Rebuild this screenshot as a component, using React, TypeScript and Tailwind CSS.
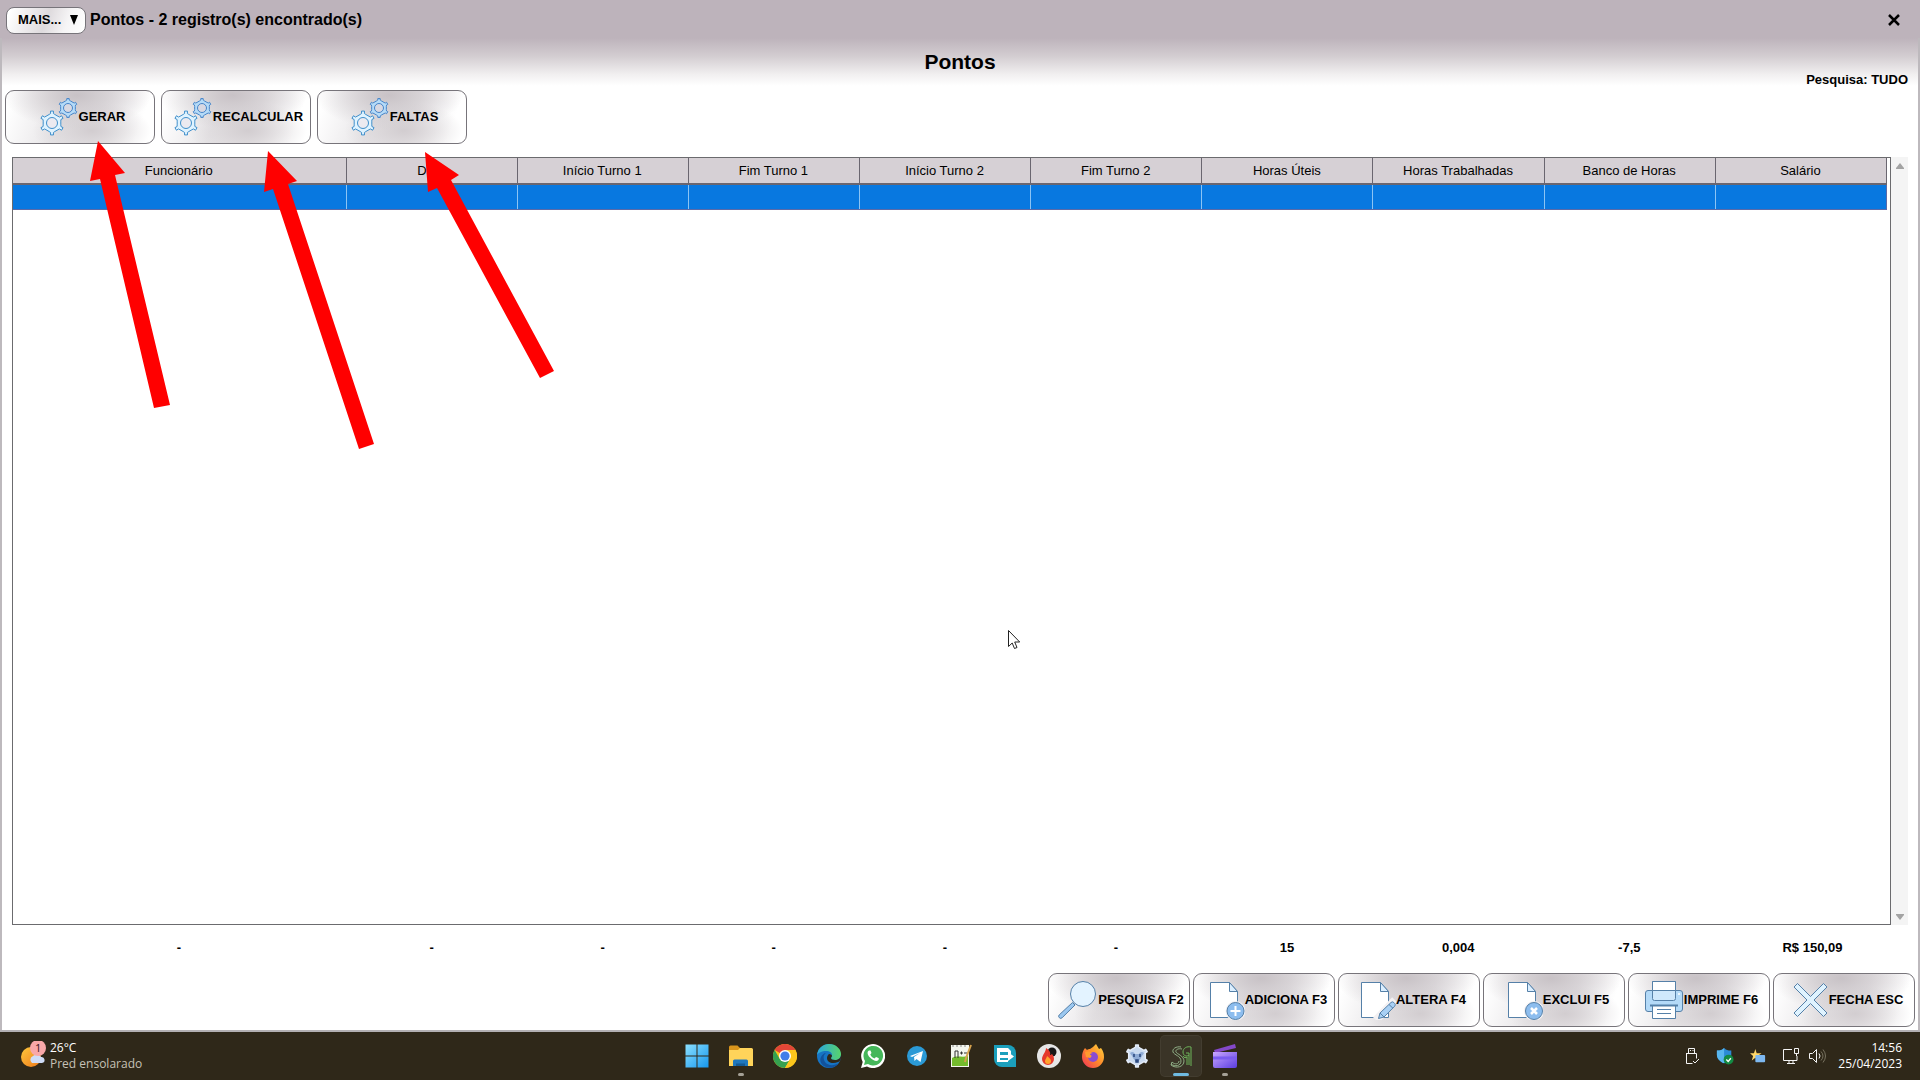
import type { ReactNode } from "react";

const columns = [
      "Funcionário",
      "Data",
      "Início Turno 1",
      "Fim Turno 1",
      "Início Turno 2",
      "Fim Turno 2",
      "Horas Úteis",
      "Horas Trabalhadas",
      "Banco de Horas",
      "Salário",
];

const totals = ["-", "-", "-", "-", "-", "-", "15", "0,004", "-7,5", "R$ 150,09"];

const line = "#5580a8";

// Closed outline of a toothed wheel
const gearPath = (cx: number, cy: number, outer: number, inner: number, teeth: number, turn: number) => {
      const points: string[] = [];
      const step = (Math.PI * 2) / teeth;
      for (let i = 0; i < teeth; i++) {
            const a = turn + i * step;
            const corners: [number, number][] = [
                  [-0.3, inner],
                  [-0.14, inner + 0.6],
                  [-0.12, outer],
                  [0.12, outer],
                  [0.14, inner + 0.6],
                  [0.3, inner],
            ];
            corners.forEach(([o, r]) => {
                  const t = a + o * step;
                  points.push(`${(cx + r * Math.cos(t)).toFixed(2)} ${(cy + r * Math.sin(t)).toFixed(2)}`);
            });
      }
      return `M${points.join("L")}Z`;
};

const Icon = ({ children }: { children: ReactNode }) => (
      <svg viewBox="0 0 40 40" className="size-10 shrink-0" fill="none" stroke={line} aria-hidden="true">
            {children}
      </svg>
);

const GearsIcon = () => (
      <Icon>
            <path d={gearPath(13, 26, 12, 9, 6, Math.PI / 2)} fill="#dff3ff" stroke="#3f8fcb" />
            <circle cx="13" cy="26" r="5.5" fill="#eceaf0" stroke="#3f8fcb" />
            <path d={gearPath(29, 11, 9.5, 7.5, 6, Math.PI / 2)} fill="#b5dbf8" stroke="#4785c9" />
            <circle cx="29" cy="11" r="4.5" fill="#d8d8e2" stroke="#4785c9" />
      </Icon>
);

const SearchIcon = () => (
      <Icon>
            <path d="M14.5 22.5 1.3 34.8a2 2 0 0 0 0 2.9 2 2 0 0 0 2.9 0L17 25Z" fill="#9cc8f0" />
            <circle cx="25" cy="14" r="12.5" fill="#e3f3ff" />
      </Icon>
);

const Sheet = () => (
      <>
            <path d="M5.5 2.5h19l8 9v26h-27Z" fill="#fff" />
            <path d="M24.5 2.5v9h8Z" fill="#dcefff" />
      </>
);

const AddIcon = () => (
      <Icon>
            <Sheet />
            <circle cx="30.5" cy="31" r="10" fill="#f3f1f3" stroke="none" />
            <circle cx="30.5" cy="31" r="8.5" fill="#8dbdee" />
            <path d="M30.5 26v10M25.5 31h10" stroke="#fff" strokeWidth="2" />
      </Icon>
);

const EditIcon = () => (
      <Icon>
            <Sheet />
            <path d="M20 40 39 20" stroke="#f3f1f3" strokeWidth="8" />
            <path d="m22.5 38.5 1.5-5.5L35 22.5a2 2 0 0 1 2.8 0l.9.9a2 2 0 0 1 0 2.8L28 37Z" fill="#a9d0f4" />
            <path d="m24 33 4 4M33 24.5l4 3.8" />
      </Icon>
);

const DeleteIcon = () => (
      <Icon>
            <Sheet />
            <circle cx="31" cy="31" r="10" fill="#f3f1f3" stroke="none" />
            <circle cx="31" cy="31" r="8.5" fill="#8dbdee" />
            <path d="m28 28 6 6M34 28l-6 6" stroke="#fff" strokeWidth="2.5" />
      </Icon>
);

const PrintIcon = () => (
      <Icon>
            <rect x="1.5" y="10.5" width="37" height="21" rx="2.5" fill="#b4daf8" />
            <path d="M8.5 1.5h23v17a2 2 0 0 1-2 2h-19a2 2 0 0 1-2-2Z" fill="#cfe8fc" />
            <path d="M8.5 1.5h23v9h-23Z" fill="#fff" />
            <path d="M6 25.5h28" strokeWidth="2" />
            <path d="M8.5 26h23v12.5h-23Z" fill="#fff" />
            <path d="M13 29.5h14M13 33.5h14" />
            <circle cx="35" cy="14" r="1" fill="#fff" stroke="none" />
      </Icon>
);

const CloseIcon = () => (
      <Icon>
            <path
                  d="m8.5 3.5 13 13 13-13L38 7 25 20l13 13-3.500 3.500-13-13-13 13L5 33l13-13L5 7Z"
                  fill="#dff3ff"
                  strokeLinejoin="round"
            />
      </Icon>
);

interface ActionButtonProps {
      label: string;
      icon: ReactNode;
      width: string;
}

const ActionButton = ({ label, icon, width }: ActionButtonProps) => (
      <button
            type="button"
            className={`flex h-[54px] items-center justify-center rounded-[9px] border border-[#77747a] bg-white bg-[radial-gradient(ellipse_50%_65%_at_48%_8%,#c8c2c6_0%,transparent_100%),radial-gradient(ellipse_40%_55%_at_58%_76%,#d2cdd0_0%,transparent_100%),linear-gradient(110deg,#ffffff_5%,#e8e6e8_38%,#eceaec_62%,#ffffff_88%)] pl-1 text-[13px] font-bold whitespace-nowrap ${width}`}
      >
            {icon}
            {label}
      </button>
);

const TitleBar = () => (
      <header className="flex h-[38px] items-center bg-[#bdb3bb] pt-[2px] pr-5 pl-[6px]">
            <button
                  type="button"
                  className="mr-1 flex h-[27px] w-20 items-center justify-between rounded-lg border border-[#77747a] bg-[linear-gradient(110deg,#ffffff_5%,#dedadd_50%,#f6f5f6_75%,#ffffff_100%)] px-[6px] pl-[11px] text-[13px] font-bold"
            >
                  MAIS...
                  <svg viewBox="0 0 10 10" className="size-[10px]" aria-hidden="true">
                        <path d="M1 0h8L5 10Z" />
                  </svg>
            </button>
            <span className="text-base font-bold">Pontos - 2 registro(s) encontrado(s)</span>
            <button type="button" aria-label="Fechar" className="ml-auto">
                  <svg viewBox="0 0 12 12" className="size-3" stroke="#000" strokeWidth="2.5" aria-hidden="true">
                        <path d="m1 1 10 10M11 1 1 11" />
                  </svg>
            </button>
      </header>
);

const PointsTable = () => (
      <div className="mx-[10px] flex flex-1">
            <div className="flex-1 border border-[#6b6b6e] pr-[3px]">
                  <table className="w-full table-fixed border-collapse text-[13px]">
                        <colgroup>
                              <col className="w-[333px]" />
                              {columns.slice(1).map((name) => (
                                    <col key={name} />
                              ))}
                        </colgroup>
                        <thead>
                              <tr className="h-[26px] bg-[#d6d0d5]">
                                    {columns.map((name) => (
                                          <th key={name} scope="col" className="border-r border-b-2 border-[#6a6670] p-0 pr-px font-normal">
                                                {name}
                                          </th>
                                    ))}
                              </tr>
                        </thead>
                        <tbody>
                              <tr className="h-[25px] bg-[#0878e0]">
                                    {columns.map((name) => (
                                          <td key={name} className="border-r border-b border-r-[#8cc4f4] border-b-[#5b6aa8] p-0 last:border-r-[#5b6aa8]" />
                                    ))}
                              </tr>
                        </tbody>
                  </table>
            </div>
            <div className="flex w-[17px] flex-col items-center justify-between bg-[#f4f4f4] pt-[6px] pb-[5px]" aria-hidden="true">
                  <svg viewBox="0 0 8 6" className="w-2" fill="#a3a3a3">
                        <path d="M4 0 8 5v1H0V5Z" />
                  </svg>
                  <svg viewBox="0 0 8 6" className="w-2" fill="#a3a3a3">
                        <path d="M4 6 0 1V0h8v1Z" />
                  </svg>
            </div>
      </div>
);

const TaskIcon = ({ name, running, active, children }: { name: string; running?: boolean; active?: boolean; children: ReactNode }) => (
      <button
            type="button"
            aria-label={name}
            className={`relative flex h-10 w-10 items-center justify-center rounded-sm ${active ? "bg-[#3a3427] ring-1 ring-[#433d30]" : ""}`}
      >
            <svg viewBox="0 0 24 24" className="size-6" fill="none" aria-hidden="true">
                  {children}
            </svg>
            {running && <span className="absolute bottom-0 h-[3px] w-[6px] rounded-full bg-[#a5a196]" />}
            {active && <span className="absolute bottom-0 h-[3px] w-4 rounded-full bg-[#6fbbe2]" />}
      </button>
);

const Taskbar = () => (
      <footer className="grid h-12 grid-cols-[1fr_auto_1fr] items-center bg-[#2f2819] font-['Open_Sans','Noto_Sans',sans-serif] text-xs text-white">
            <button type="button" className="flex items-center gap-[2px] pl-5 text-left">
                  <svg viewBox="0 0 28 30" className="h-[30px] w-7" aria-hidden="true">
                        <defs>
                              <linearGradient id="sun" x1="0" y1="0" x2="1" y2="1">
                                    <stop offset="0" stopColor="#ffc83c" />
                                    <stop offset="1" stopColor="#ee7a1c" />
                              </linearGradient>
                        </defs>
                        <circle cx="11" cy="16" r="10" fill="url(#sun)" />
                        <path d="M12 22a4 4 0 0 1 1-7 5 5 0 0 1 8 1 3 3 0 0 1 1 6Z" fill="#cfdcf6" />
                        <circle cx="18" cy="7" r="8" fill="#f9a8a8" />
                        <text x="15" y="11" fontSize="11" fill="#3a1518">1</text>
                  </svg>
                  <span className="leading-4">
                        26°C
                        <br />
                        <span className="text-[#c6c1b6]">Pred ensolarado</span>
                  </span>
            </button>
            <nav className="flex gap-1 pl-[2px]" aria-label="Aplicativos">
                  <TaskIcon name="Iniciar">
                        <defs>
                              <linearGradient id="win" x1="0" y1="0" x2="1" y2="1">
                                    <stop offset="0" stopColor="#8be0ff" />
                                    <stop offset="1" stopColor="#1697ee" />
                              </linearGradient>
                        </defs>
                        <path d="M.5.5h11v11H.5ZM12.500.5h11v11h-11ZM.5 12.500h11v11H.5ZM12.500 12.500h11v11h-11Z" fill="url(#win)" />
                  </TaskIcon>
                  <TaskIcon name="Explorador de Arquivos" running>
                        <path d="M0 3a1.500 1.500 0 0 1 1.500-1.500h7L11 4v4H0Z" fill="#d9951c" />
                        <path d="M0 6h9l2-2h11.500A1.500 1.500 0 0 1 24 5.500V22H0Z" fill="#ffd45a" />
                        <path d="M4 22v-5a1.500 1.500 0 0 1 1.500-1.500h12A1.500 1.500 0 0 1 19 17v5Z" fill="#1f77bd" />
                        <path d="M7 22v-2.500h9V22Z" fill="#145a94" />
                  </TaskIcon>
                  <TaskIcon name="Chrome">
                        <circle cx="12" cy="12" r="12" fill="#fbc61c" />
                        <path d="M12 12 1.600 6a12 12 0 0 1 20.800 0Z" fill="#e24637" />
                        <path d="M1.600 6a12 12 0 0 0 10.400 18L17.200 15 12 12 6.800 15Z" fill="#35a150" />
                        <path d="M12 6h10.400A12 12 0 0 1 12 24l5.200-9Z" fill="#fbc61c" />
                        <circle cx="12" cy="12" r="6" fill="#fff" />
                        <circle cx="12" cy="12" r="4.6" fill="#3f7ee8" />
                  </TaskIcon>
                  <TaskIcon name="Edge">
                        <defs>
                              <linearGradient id="edge" x1="0" y1="0" x2="1" y2="0">
                                    <stop offset="0" stopColor="#2aa6dd" />
                                    <stop offset="1" stopColor="#58d46a" />
                              </linearGradient>
                        </defs>
                        <circle cx="12" cy="12" r="12" fill="#1674c4" />
                        <path d="M0 11C1 4 6 0 12 0c7 0 12 5 12 10 0 4-3 6-6 6-3 0-4-1-4-2s1-1 1-3-2-4-6-4c-4 0-8 2-9 4Z" fill="url(#edge)" />
                        <path d="M9 9c-3 2-3 6-1 9 3 4 9 4 14 1-3 4-8 6-13 4C4 21 2 17 4 13c1-2 3-4 5-4Z" fill="#12529c" />
                        <path d="M14 14c0 1 1 2 4 2 3 0 6-2 6-5v3c-1 3-2 4-3 4-5 2-11 1-11-4 0-2 1-3 2-4 2 0 3 1 3 2s-1 1-1 2Z" fill="#2f2819" />
                  </TaskIcon>
                  <TaskIcon name="WhatsApp">
                        <path d="M0 24l1.700-6A12 12 0 1 1 6 22.400Z" fill="#fff" />
                        <path d="m3 21 1-4a9.800 9.800 0 1 1 3 3Z" fill="#45b75a" />
                        <path d="M8 6.500c-2 1-2 4 1 7s6 4 8 3c1-1 1-2 .5-2.500L15 13l-1.500 1.500c-2-.7-3.500-2-4.200-4l1.200-1.500L9.500 6.500Z" fill="#fff" />
                  </TaskIcon>
                  <TaskIcon name="Telegram">
                        <circle cx="12" cy="12" r="10" fill="#2b9ad6" />
                        <path d="m5 12 13-5-2.500 11-4-3-2 2-.5-4 6-4-8 4Z" fill="#fff" />
                  </TaskIcon>
                  <TaskIcon name="Notepad++">
                        <path d="M2 1h18v22H2Z" fill="#f4f6ee" />
                        <path d="M3 14c5-3 10 0 16-2v10H3Z" fill="#74bb2c" />
                        <path d="M6 7v7M6 7h3v7M11 9h3M12.500 7.500v3M15 9h3" stroke="#333" />
                        <path d="M4 1v2M8 1v2M12 1v2M16 1v2" stroke="#888" />
                        <path d="m22 1-5 13-1 4" stroke="#d6a24d" strokeWidth="2" />
                  </TaskIcon>
                  <TaskIcon name="Acesso remoto">
                        <path d="M1 1h14a8 8 0 0 1 8 8v14H9a8 8 0 0 1-8-8Z" fill="#1b9fbc" />
                        <path d="M4 4h11l3 3v3h-3V8H7v8h8v2H4Z" fill="#fff" />
                        <path d="M7 11h8V8l6 4.500-6 4.500v-3H7Z" fill="#fff" />
                  </TaskIcon>
                  <TaskIcon name="Gravador">
                        <circle cx="12" cy="12" r="12" fill="#e6e6e6" />
                        <circle cx="15" cy="8" r="4.5" fill="#161616" />
                        <path d="M9 4c0 4-4 7-4 11a6 6 0 0 0 12 0c0-2-1-4-2-5-1 1-2 1-2 1 1-3-1-5-4-7Z" fill="#e5392c" />
                        <path d="M10 12c0 2-2 3-2 5a3 3 0 0 0 6 0c0-2-2-3-4-5Z" fill="#ffa42e" />
                  </TaskIcon>
                  <TaskIcon name="Firefox">
                        <defs>
                              <linearGradient id="fox" x1="1" y1="0" x2="0" y2="1">
                                    <stop offset="0" stopColor="#ffd83e" />
                                    <stop offset="0.5" stopColor="#ff8a2b" />
                                    <stop offset="1" stopColor="#ee2d5c" />
                              </linearGradient>
                        </defs>
                        <path d="M15 0c1 2 2 3 3 5l2-1c2 3 3 5 3 9a11 11 0 0 1-22 0c0-4 1-6 3-9l2 2c1-1 2-1 3-1 2-1 4-3 6-5Z" fill="url(#fox)" />
                        <circle cx="12" cy="13" r="5" fill="#8a4bd0" />
                        <path d="M4 8c3-1 6 0 8 1-2 0-3 1-3 2 2 0 2 2 0 3l-4-1Z" fill="#ff9a2e" />
                  </TaskIcon>
                  <TaskIcon name="Configurador">
                        <path d={gearPath(12, 12, 11, 8.5, 6, Math.PI / 2)} fill="#c9daf0" stroke="#e6eefa" strokeWidth="1.5" strokeLinejoin="round" />
                        <path d="M5 9c2-2 4-1 5 1h4c1-2 3-3 5-1-1 2-2 2-3 5l-4 5-4-5C7 11 6 11 5 9Z" fill="#8eabd6" />
                        <path d="M9 10v3M15 10v3M11 16h2v2h-2Z" stroke="#27457c" strokeWidth="1.5" />
                  </TaskIcon>
                  <TaskIcon name="Sistema" active>
                        <g stroke="#8fae86" strokeWidth="1">
                              <path d="M12 3C7 2 3 5 4 8s8 4 8 9-6 6-10 3" />
                              <path d="M13 5C9 4 6 6 7 8s8 4 8 9c0 6-8 8-13 4l1-3c3 3 7 2 7-1" />
                              <path d="M22 3c-4-1-8 1-8 5s4 5 6 3V9h-3M22 3v19M20 11v10M14 12c1 2 3 2 4 1v8" stroke="#6db55a" />
                        </g>
                  </TaskIcon>
                  <TaskIcon name="Clipchamp" running>
                        <defs>
                              <linearGradient id="clip" x1="0" y1="0" x2="1" y2="1">
                                    <stop offset="0" stopColor="#c9a6ff" />
                                    <stop offset="1" stopColor="#5b3de0" />
                              </linearGradient>
                        </defs>
                        <path d="M1 6 22 0l1 4L2 9Z" fill="#8448c9" />
                        <path d="M0 8h24v14a2 2 0 0 1-2 2H2a2 2 0 0 1-2-2Z" fill="url(#clip)" />
                        <path d="M0 14h24" stroke="#7b5cf0" strokeWidth="3" />
                  </TaskIcon>
            </nav>
            <div className="flex items-center justify-end pr-[18px]">
                  <div className="mr-3 flex items-center gap-3" aria-hidden="true">
                        <svg viewBox="0 0 16 18" className="h-[18px] w-4" fill="none" stroke="#f4f4f4">
                              <path d="M4.500 6V1.500h6V6M2.500 6.500h10v5M2.500 6v10.500h6M6 3.500h1M8.500 3.500h1M9 14l2 2 4-4" />
                        </svg>
                        <svg viewBox="0 0 20 20" className="mx-1 size-[18px]">
                              <path d="M1 4c4 0 6-1 8-3 2 2 4 3 8 3v5c0 4-4 8-8 9-4-1-8-5-8-9Z" fill="#2b8bd6" />
                              <path d="M9 1v17c-4-1-8-5-8-9V4c4 0 6-1 8-3Z" fill="#58b6ee" />
                              <circle cx="14" cy="14" r="5.5" fill="#138a43" />
                              <path d="m11.500 14 2 2 3-3.500" fill="none" stroke="#fff" strokeWidth="1.5" />
                        </svg>
                        <svg viewBox="0 0 18 18" className="mr-1 size-4">
                              <path d="m6 1 1.500 5H13L8.500 9l1.500 5-4-3-4 3 1.500-5L0 6h4.500Z" fill="#ffd768" />
                              <rect x="6" y="8" width="11" height="8" rx="1" fill="#7db8f0" />
                        </svg>
                        <svg viewBox="0 0 18 18" className="size-[18px]" fill="none" stroke="#f4f4f4">
                              <path d="M10 2.500H1.500v11H15V9M5 16.500h8M7 13.500v3M11 13.500v3M12.500 1.500h4v5h-4ZM14.500 6.500V9" />
                        </svg>
                        <svg viewBox="0 0 18 16" className="-ml-1 h-4 w-[18px]" fill="none" stroke="#f4f4f4">
                              <path d="M1.500 5.500h3l4-4v13l-4-4h-3ZM11 5.500q2 2.500 0 5" />
                              <path d="M13 3.500q4 4.500 0 9M15 1.500q5 6.500 0 13" stroke="#77725f" />
                        </svg>
                  </div>
                  <time dateTime="2023-04-25T14:56" className="text-right leading-4">
                        14:56
                        <br />
                        25/04/2023
                  </time>
            </div>
      </footer>
);

// Arrows drawn over the window
const Annotations = () => (
      <svg width="620" height="460" className="pointer-events-none absolute top-0 left-0" fill="#ff0000" aria-hidden="true">
            <path d="M98 141 125 173 115 175 170 405 154 408 100 179 90 181Z" />
            <path d="M268 151 297 181 288 184 374 444 359 449 273 189 264 192Z" />
            <path d="M425 152 459 175 451 180 554 371 540 378 437 188 428 192Z" />
      </svg>
);

const Pointer = () => (
      <svg viewBox="0 0 12 20" className="pointer-events-none absolute top-[630px] left-[1008px] h-5 w-3" fill="#fff" stroke="#222" aria-hidden="true">
            <path d="M.5.5v16l3.700-3.500 2.300 5.500 2.500-1-2.300-5.500h5Z" />
      </svg>
);

const App = () => {
      return (
            <div className="relative flex min-h-screen flex-col bg-white font-['Liberation_Sans',Arial,sans-serif] text-black">
                  <div className="flex flex-1 flex-col border-b-2 border-[#b3b0b3]">
                        <TitleBar />
                        <main className="flex flex-1 flex-col border-x-2 border-[#bdb9bd]">
                              <div className="grid h-[52px] grid-cols-[1fr_auto_1fr] bg-[linear-gradient(#bdb3bb_0%,#d3cdd1_35%,#f1eff0_70%,#ffffff_92%)]">
                                    <h1 className="col-start-2 pt-2 text-[21px] leading-8 font-bold">Pontos</h1>
                                    <p className="self-end pr-[10px] text-right text-[13px] leading-5 font-bold">Pesquisa: TUDO</p>
                              </div>
                              <div className="mb-[13px] flex gap-[6px] px-[3px]">
                                    <ActionButton label="GERAR" icon={<GearsIcon />} width="w-[150px]" />
                                    <ActionButton label="RECALCULAR" icon={<GearsIcon />} width="w-[150px]" />
                                    <ActionButton label="FALTAS" icon={<GearsIcon />} width="w-[150px]" />
                              </div>
                              <PointsTable />
                              <div className="mr-8 ml-[10px] grid h-12 grid-cols-[334px_repeat(9,minmax(0,1fr))] pt-[13px] text-center text-[13px] leading-5 font-bold">
                                    {totals.map((total, i) => (
                                          <span key={columns[i]} className="last:pl-6">{total}</span>
                                    ))}
                              </div>
                              <div className="mb-[3px] flex justify-end gap-[3px] pr-[3px]">
                                    <ActionButton label="PESQUISA F2" icon={<SearchIcon />} width="w-[142px]" />
                                    <ActionButton label="ADICIONA F3" icon={<AddIcon />} width="w-[142px]" />
                                    <ActionButton label="ALTERA F4" icon={<EditIcon />} width="w-[142px]" />
                                    <ActionButton label="EXCLUI F5" icon={<DeleteIcon />} width="w-[142px]" />
                                    <ActionButton label="IMPRIME F6" icon={<PrintIcon />} width="w-[142px]" />
                                    <ActionButton label="FECHA ESC" icon={<CloseIcon />} width="w-[142px]" />
                              </div>
                        </main>
                  </div>
                  <Taskbar />
                  <Annotations />
                  <Pointer />
            </div>
      );
};

export default App;
